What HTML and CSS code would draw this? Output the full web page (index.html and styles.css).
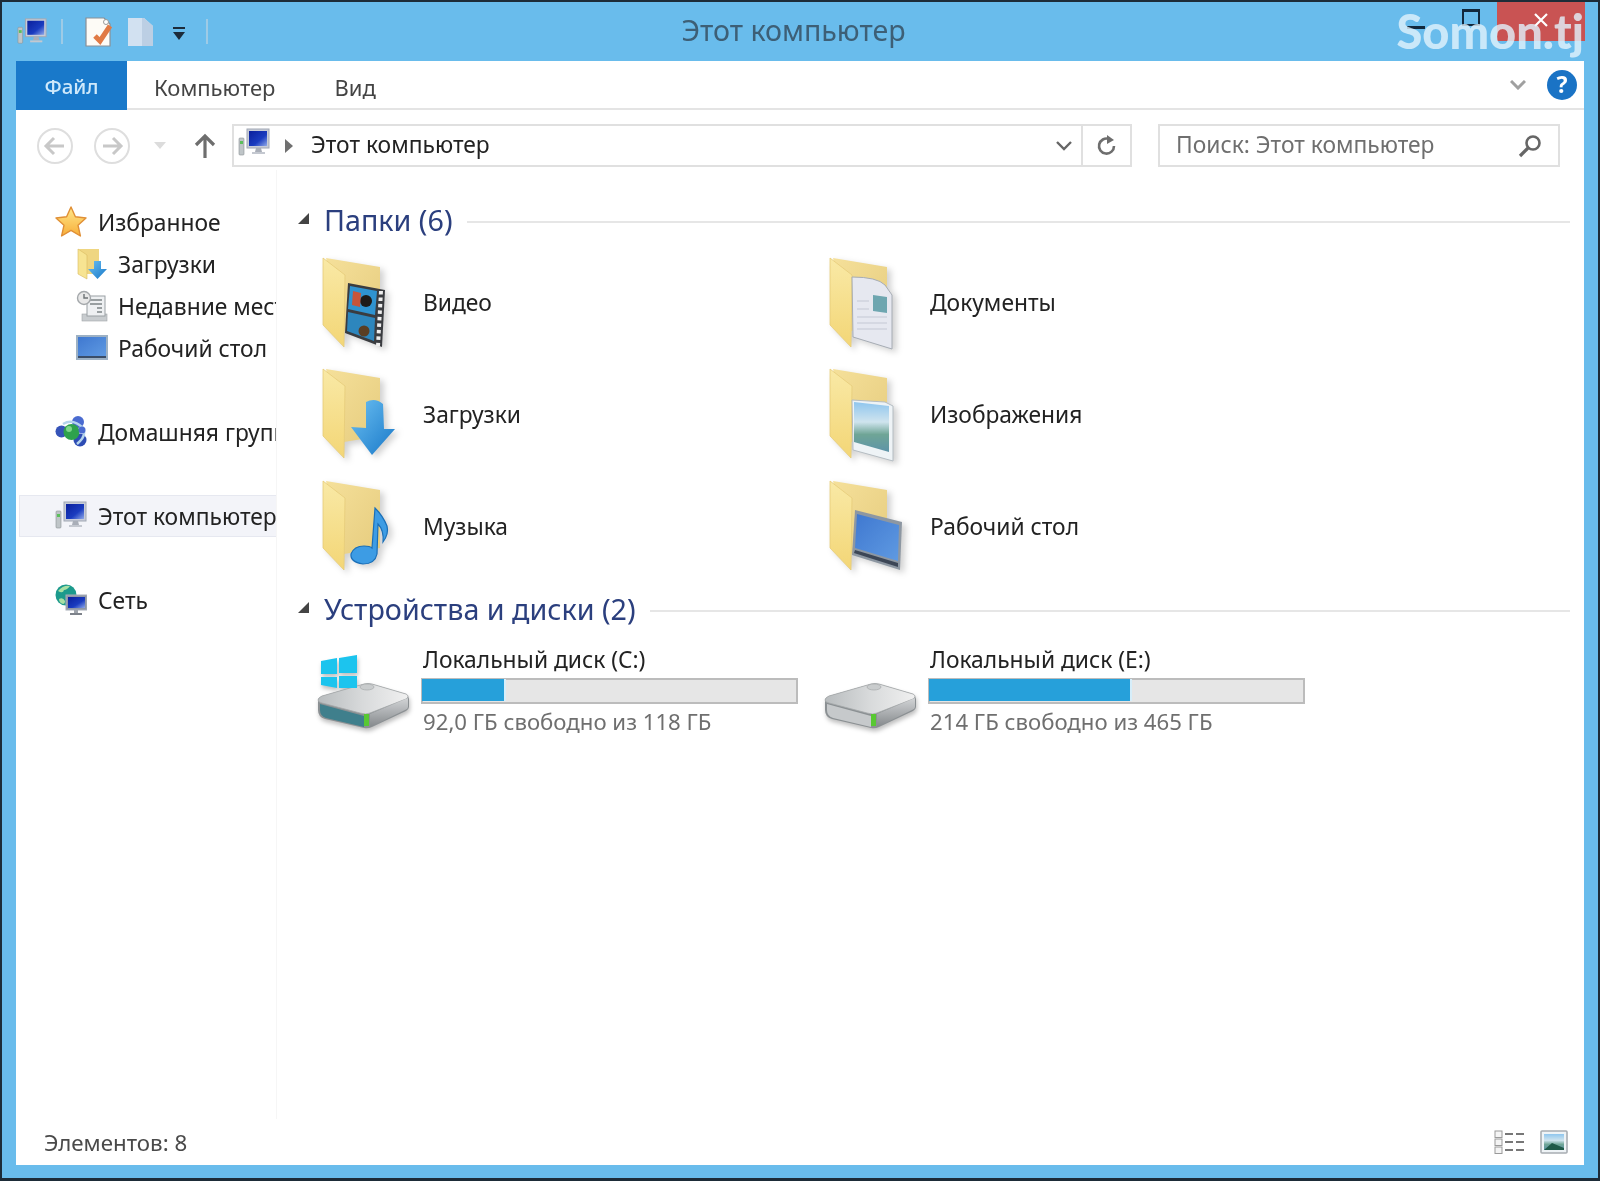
FILE: index.html
```html
<!DOCTYPE html>
<html lang="ru">
<head>
<meta charset="utf-8">
<title>Этот компьютер</title>
<link rel="stylesheet" href="styles.css">
</head>
<body>
<svg class="sprite" width="0" height="0" aria-hidden="true">
  <defs>
    <linearGradient id="gLeaf" x1="0" y1="0" x2="0" y2="1"><stop offset="0" stop-color="#f9e9a6"/><stop offset="1" stop-color="#f3d676"/></linearGradient>
    <linearGradient id="gBack" x1="0" y1="0" x2="1" y2="1"><stop offset="0" stop-color="#f5e09a"/><stop offset="1" stop-color="#e6cc7e"/></linearGradient>
    <linearGradient id="gBlue" x1="0" y1="0" x2="1" y2="1"><stop offset="0" stop-color="#6cc0f2"/><stop offset="1" stop-color="#1878c8"/></linearGradient>
    <linearGradient id="gDesk" x1="0" y1="0" x2="1" y2="1"><stop offset="0" stop-color="#3f78d0"/><stop offset="1" stop-color="#5f9ae2"/></linearGradient>
    <linearGradient id="gScreen" x1="0" y1="0" x2="1" y2="1"><stop offset="0" stop-color="#0a1f9c"/><stop offset=".6" stop-color="#1a3cc0"/><stop offset="1" stop-color="#8fa8e8"/></linearGradient>
    <linearGradient id="gPic" x1="0" y1="0" x2="0" y2="1"><stop offset="0" stop-color="#8fc6ee"/><stop offset=".4" stop-color="#cfe4ee"/><stop offset=".65" stop-color="#6fa596"/><stop offset="1" stop-color="#5d93a8"/></linearGradient>
    <linearGradient id="gHdd" x1="0" y1="0" x2="1" y2="0"><stop offset="0" stop-color="#b8bcbe"/><stop offset=".5" stop-color="#d8dadb"/><stop offset="1" stop-color="#f0f0f0"/></linearGradient>
    <linearGradient id="gHddSide" x1="0" y1="0" x2="0" y2="1"><stop offset="0" stop-color="#d2d4d6"/><stop offset="1" stop-color="#85898c"/></linearGradient>
    <linearGradient id="gStar" x1="0" y1="0" x2="0" y2="1"><stop offset="0" stop-color="#ffe88a"/><stop offset="1" stop-color="#f7ae3a"/></linearGradient>

    <symbol id="folder" viewBox="0 0 80 100">
      <path d="M6 5 L60 14 V72 L24 78 Z" fill="url(#gBack)"/>
      <path d="M3 5 L25 22 L24 94 L3 72 Z" fill="url(#gLeaf)" stroke="#e6cb7a" stroke-width=".8"/>
    </symbol>

    <symbol id="computer" viewBox="0 0 32 32">
      <rect x="1" y="11" width="5" height="17" rx="1" fill="#bfc5c8" stroke="#8c9294" stroke-width=".6"/>
      <rect x="2" y="14" width="3" height="3" fill="#5bbf5b"/>
      <rect x="9" y="2" width="22" height="19" fill="#c7ccd8" stroke="#a2a8b4"/>
      <rect x="11" y="4" width="18" height="15" fill="url(#gScreen)"/>
      <path d="M18 21h5l1 4h-7z" fill="#a9aeb8"/>
      <rect x="14" y="25" width="13" height="2" fill="#c4c8d0"/>
    </symbol>

    <symbol id="star" viewBox="0 0 32 32">
      <path d="M16 1 L20.4 10.8 L31 12 L23 19.2 L25.4 30 L16 24.4 L6.6 30 L9 19.2 L1 12 L11.6 10.8 Z" fill="url(#gStar)" stroke="#e08f35" stroke-width="1.4" stroke-linejoin="round"/>
    </symbol>

    <symbol id="folderDown" viewBox="0 0 32 32">
      <path d="M3 1 H23 V26 H11 Z" fill="#efd681"/>
      <path d="M2 1 L11 7 V31 L2 26 Z" fill="#f7e492" stroke="#d9bb60" stroke-width=".6"/>
      <path d="M18 13 h7 v8 h6 l-9.500 10 L12 21 h6 Z" fill="url(#gBlue)"/>
    </symbol>

    <symbol id="recent" viewBox="0 0 32 32">
      <rect x="6" y="24" width="25" height="7" fill="#c8cccf" stroke="#a0a5a8" stroke-width=".6"/>
      <rect x="11" y="6" width="18" height="20" fill="#eef0f2" stroke="#9aa0a4"/>
      <path d="M14 10h12M14 14h12M21 18h5M21 22h5" stroke="#7d8487" stroke-width="1.600"/>
      <circle cx="8" cy="8" r="6.500" fill="#e8e8e8" stroke="#a4a8ab" stroke-width="1.400"/>
      <path d="M8 4v4h4" fill="none" stroke="#6d7376" stroke-width="1.400"/>
    </symbol>

    <symbol id="desktop" viewBox="0 0 32 32">
      <rect x="0" y="3" width="32" height="25" fill="#9db1c4"/>
      <rect x="2" y="5" width="28" height="19" fill="url(#gDesk)"/>
      <rect x="2" y="24" width="28" height="2" fill="#3a4d68"/>
    </symbol>

    <symbol id="home" viewBox="0 0 32 32">
      <circle cx="6.500" cy="15.500" r="6" fill="#3654b8"/>
      <circle cx="23" cy="6" r="6" fill="#4a6bd0"/>
      <circle cx="25" cy="24" r="6.500" fill="#2d4cb4"/>
      <path d="M8 8 Q18 2 28 12 Q32 20 22 28" fill="none" stroke="#b4d4ec" stroke-width="2.500"/>
      <circle cx="16.500" cy="16" r="8" fill="#2ea24c"/>
      <circle cx="14" cy="13" r="3" fill="#7ed68a"/>
      <circle cx="27" cy="14" r="3.500" fill="#4a6bd0"/>
    </symbol>

    <symbol id="network" viewBox="0 0 32 32">
      <circle cx="11" cy="11" r="10.500" fill="#1c9a8c"/>
      <path d="M3 7 q5 -6 12 -5 q-3 4 -6 4 q-1 4 -6 1 M4 15 q4 -2 6 2 q0 3 -2 3 q-4 -1 -4 -5" fill="#a9e0a4"/>
      <rect x="11" y="11" width="21" height="15" fill="#8f97a6" stroke="#a8aeb8"/>
      <rect x="13" y="13" width="17" height="11" fill="url(#gScreen)"/>
      <path d="M19 26h4v3h-4z" fill="#9ea3ab"/>
      <rect x="15" y="29" width="12" height="2" fill="#7d828a"/>
    </symbol>

    <symbol id="hdd" viewBox="0 0 100 80">
      <path d="M4 50 Q4 48 8 46 L50 34 Q54 33 58 34 L92 44 Q95 46 95 49 V57 Q95 59 92 61 L58 77 Q54 79 50 78 L11 69 Q4 67 4 60 Z" fill="#8b9093"/>
      <path d="M4 50 Q4 48 8 46 L50 34 Q54 33 58 34 L92 44 Q96 46 92 49 L56 63 Q52 65 46 63 L8 53 Q4 52 4 50 Z" fill="url(#gHdd)" stroke="#a4a8aa" stroke-width=".8"/>
      <ellipse cx="53" cy="37" rx="7" ry="3" fill="#c9cccd" stroke="#a6a9ab" stroke-width=".7"/>
      <path d="M56 64 L94 48 V57 Q94 59 91 60 L56 77 Z" fill="url(#gHddSide)"/>
    </symbol>
  </defs>
</svg>

<div class="window">
  <header class="titlebar">
    <div class="qat">
      <svg class="qat-computer"><use href="#computer"/></svg>
      <span class="qat-sep"></span>
      <svg class="qat-doc" viewBox="0 0 28 30">
        <path d="M2 1 H20 L26 7 V29 H2 Z" fill="#fdfbf6" stroke="#8a8f95" stroke-width="1.200"/>
        <circle cx="22" cy="5" r="2.500" fill="#fff" stroke="#9b9b9b"/>
        <path d="M11 19 L16 24 L26 9" fill="none" stroke="#e07a45" stroke-width="5"/>
      </svg>
      <svg class="qat-page" viewBox="0 0 26 28">
        <path d="M0 0 H16 L25 8 V28 H0 Z" fill="#d2e1f1"/>
        <path d="M14 0 H16 L25 8 V28 H14 Z" fill="#bccfe4"/>
      </svg>
      <svg class="qat-drop" viewBox="0 0 14 14">
        <rect x="1" y="0" width="12" height="2" fill="#1c2b3a"/>
        <path d="M1 5 H13 L7 13 Z" fill="#1c2b3a"/>
      </svg>
      <span class="qat-sep qat-sep-last"></span>
    </div>
    <h1 class="title">Этот компьютер</h1>
    <div class="controls">
      <span class="ctl ctl-min"><i class="min-bar"></i></span>
      <span class="ctl ctl-max"><i class="max-box"></i></span>
      <span class="ctl ctl-close">
        <svg class="close-x" viewBox="0 0 14 14"><path d="M1 1 L13 13 M13 1 L1 13" stroke="#fff" stroke-width="2.200"/></svg>
      </span>
    </div>
  </header>

  <main class="frame">
    <nav class="ribbon">
      <span class="tab tab-file">Файл</span>
      <span class="tab tab-computer">Компьютер</span>
      <span class="tab tab-view">Вид</span>
      <span class="ribbon-space"></span>
      <svg class="ribbon-chev" viewBox="0 0 16 10"><path d="M1 1 L8 8 L15 1" fill="none" stroke="#a0a0a0" stroke-width="3"/></svg>
      <span class="help">?</span>
    </nav>

    <div class="nav">
      <svg class="nav-round" viewBox="0 0 36 36"><circle cx="18" cy="18" r="17" fill="none" stroke="#dedede" stroke-width="2"/><path d="M27 18 H10 M17 10 L9 18 L17 26" fill="none" stroke="#c8c8c8" stroke-width="3"/></svg>
      <svg class="nav-round nav-forward" viewBox="0 0 36 36"><circle cx="18" cy="18" r="17" fill="none" stroke="#dedede" stroke-width="2"/><path d="M9 18 H26 M19 10 L27 18 L19 26" fill="none" stroke="#c8c8c8" stroke-width="3"/></svg>
      <svg class="nav-drop" viewBox="0 0 14 8"><path d="M0 0 H14 L7 8 Z" fill="#dcdcdc"/></svg>
      <svg class="nav-up" viewBox="0 0 22 26"><path d="M11 25 V3 M2 12 L11 3 L20 12" fill="none" stroke="#6e6e6e" stroke-width="3.200"/></svg>
      <div class="address">
        <svg class="address-icon"><use href="#computer"/></svg>
        <svg class="address-arrow" viewBox="0 0 8 14"><path d="M0 0 L8 7 L0 14 Z" fill="#707070"/></svg>
        <span class="address-text">Этот компьютер</span>
        <svg class="address-chev" viewBox="0 0 16 10"><path d="M1 1 L8 8 L15 1" fill="none" stroke="#666" stroke-width="2.400"/></svg>
        <span class="address-refresh">
          <svg class="refresh-icon" viewBox="0 0 22 22"><path d="M18 11 A7.500 7.500 0 1 1 13 4" fill="none" stroke="#6e6e6e" stroke-width="2.600"/><path d="M11 0 L18 5 L11 9 Z" fill="#6e6e6e"/></svg>
        </span>
      </div>
      <div class="search">
        <span class="search-text">Поиск: Этот компьютер</span>
        <svg class="search-icon" viewBox="0 0 24 24"><circle cx="15" cy="9" r="6.500" fill="none" stroke="#666" stroke-width="2.600"/><path d="M10 14 L2 22" stroke="#666" stroke-width="3.200"/></svg>
      </div>
    </div>

    <div class="content">
      <aside class="sidebar">
        <div class="row"><svg class="row-icon"><use href="#star"/></svg><span class="row-text">Избранное</span></div>
        <div class="row row-child"><svg class="row-icon"><use href="#folderDown"/></svg><span class="row-text">Загрузки</span></div>
        <div class="row row-child"><svg class="row-icon"><use href="#recent"/></svg><span class="row-text">Недавние места</span></div>
        <div class="row row-child"><svg class="row-icon"><use href="#desktop"/></svg><span class="row-text">Рабочий стол</span></div>
        <div class="row row-group"><svg class="row-icon"><use href="#home"/></svg><span class="row-text">Домашняя группа</span></div>
        <div class="row row-group row-selected"><svg class="row-icon"><use href="#computer"/></svg><span class="row-text">Этот компьютер</span></div>
        <div class="row row-group"><svg class="row-icon"><use href="#network"/></svg><span class="row-text">Сеть</span></div>
      </aside>

      <section class="main">
        <div class="group-head">
          <svg class="group-tri" viewBox="0 0 11 11"><path d="M11 0 V11 H0 Z" fill="#444"/></svg>
          <span class="group-title">Папки (6)</span>
          <span class="group-line"></span>
        </div>
        <div class="grid folders">
          <div class="item">
            <svg class="folder" viewBox="0 0 80 100">
              <use href="#folder"/>
              <path d="M28 30 L65 37 L62 94 L25 80 Z" fill="#3a3c40"/>
              <path d="M30 33 L57 38 L55 62 L28 56 Z" fill="#2f93d0"/>
              <path d="M28 59 L55 65 L54 88 L27 78 Z" fill="#2d86bd"/>
              <circle cx="46" cy="48" r="6" fill="#1e1a18"/>
              <path d="M33 38 L41 40 L40 54 L32 52 Z" fill="#c8553a"/>
              <circle cx="44" cy="78" r="5.500" fill="#5a3e24"/>
              <path d="M61 38 L58 93" stroke="#eeeeee" stroke-width="4" stroke-dasharray="3.500 3"/>
            </svg>
            <span class="item-name">Видео</span>
          </div>
          <div class="item">
            <svg class="folder" viewBox="0 0 80 100">
              <use href="#folder"/>
              <path d="M25 24 Q50 24 58 32 L65 42 V96 L26 84 Z" fill="#e6e8f0" stroke="#a6acb4" stroke-width="1"/>
              <path d="M46 42 L60 44 V60 L46 58 Z" fill="#6ea6b0"/>
              <path d="M30 48 H42 M30 56 H42 M30 64 H60 M30 70 H60 M30 76 H60" stroke="#d5d8e2" stroke-width="2"/>
            </svg>
            <span class="item-name">Документы</span>
          </div>
          <div class="item">
            <svg class="folder" viewBox="0 0 80 100">
              <use href="#folder"/>
              <path d="M46 38 Q55 33 63 40 L64 65 H75 L52 91 L31 63 L46 64 Z" fill="url(#gBlue)"/>
            </svg>
            <span class="item-name">Загрузки</span>
          </div>
          <div class="item">
            <svg class="folder" viewBox="0 0 80 100">
              <use href="#folder"/>
              <path d="M25 36 L58 38 L66 42 V97 L26 86 Z" fill="#eef3f6" stroke="#b4bcc2" stroke-width="1"/>
              <path d="M27 38 L62 42 V88 L27 78 Z" fill="url(#gPic)"/>
            </svg>
            <span class="item-name">Изображения</span>
          </div>
          <div class="item">
            <svg class="folder" viewBox="0 0 80 100">
              <use href="#folder"/>
              <path d="M55 32 Q63 40 67 50 Q69 58 63 66 Q64 54 58 48 L57 78 Q55 88 43 88 Q30 86 31 78 Q34 70 44 70 Q50 70 52 72 Z" fill="#3d9ce4" stroke="#1a6fb8" stroke-width="1.200"/>
            </svg>
            <span class="item-name">Музыка</span>
          </div>
          <div class="item">
            <svg class="folder" viewBox="0 0 80 100">
              <use href="#folder"/>
              <path d="M28 34 L75 46 L73 94 L25 79 Z" fill="#8d97a2"/>
              <path d="M30 38 L72 49 L71 85 L28 72 Z" fill="url(#gDesk)"/>
              <path d="M28 74 L71 87 V91 L27 77 Z" fill="#3c4656"/>
            </svg>
            <span class="item-name">Рабочий стол</span>
          </div>
        </div>

        <div class="group-head group-drives">
          <svg class="group-tri" viewBox="0 0 11 11"><path d="M11 0 V11 H0 Z" fill="#444"/></svg>
          <span class="group-title">Устройства и диски (2)</span>
          <span class="group-line"></span>
        </div>
        <div class="grid drives">
          <div class="drive">
            <svg class="drive-icon" viewBox="0 0 100 80">
              <use href="#hdd"/>
              <path d="M6 54 L50 66 V77 L12 68 Q6 66 6 60 Z" fill="#3f7f8c"/>
              <rect x="50" y="64" width="5" height="12" fill="#58c832"/>
              <path d="M7 11 L23 8 V24 H7 Z M25 8 L43 5 V23 H25 Z M7 27 H23 V38 L7 35 Z M25 26 H43 V38 L25 38 Z" fill="#1cc4ee"/>
            </svg>
            <div class="drive-info">
              <div class="drive-name">Локальный диск (C:)</div>
              <div class="bar"><div class="bar-fill" style="width:22%"></div></div>
              <div class="drive-free">92,0 ГБ свободно из 118 ГБ</div>
            </div>
          </div>
          <div class="drive">
            <svg class="drive-icon" viewBox="0 0 100 80">
              <use href="#hdd"/>
              <path d="M6 54 L50 66 V77 L12 68 Q6 66 6 60 Z" fill="#c6c9cb"/>
              <rect x="50" y="64" width="5" height="12" fill="#58c832"/>
            </svg>
            <div class="drive-info">
              <div class="drive-name">Локальный диск (E:)</div>
              <div class="bar"><div class="bar-fill" style="width:54%"></div></div>
              <div class="drive-free">214 ГБ свободно из 465 ГБ</div>
            </div>
          </div>
        </div>
      </section>
    </div>

    <footer class="status">
      <span class="status-text">Элементов: 8</span>
      <span class="status-views">
        <svg class="view-list" viewBox="0 0 30 24">
          <rect x="1" y="1" width="7" height="6.500" fill="#f4f4f4" stroke="#9a9a9a"/>
          <rect x="1" y="9" width="7" height="6.500" fill="#f4f4f4" stroke="#9a9a9a"/>
          <rect x="1" y="17" width="7" height="6.500" fill="#f4f4f4" stroke="#9a9a9a"/>
          <path d="M11 4 H19 M22 4 H30 M11 12 H19 M22 12 H30 M11 20 H19 M22 20 H30" stroke="#777" stroke-width="2"/>
        </svg>
        <svg class="view-large" viewBox="0 0 28 24">
          <rect x="1" y="1" width="26" height="22" rx="1" fill="#eef3f6" stroke="#a8adb2" stroke-width="1.600"/>
          <rect x="4" y="4" width="20" height="16" fill="url(#gPic)"/>
          <path d="M4 20 L12 13 L24 18 V20 Z" fill="#1f5a48"/>
        </svg>
      </span>
    </footer>
  </main>

  <div class="watermark">Somon.tj</div>
</div>
</body>
</html>
```

FILE: styles.css
```css
* { box-sizing: border-box; }

html, body { margin: 0; padding: 0; background: #fff; }

body {
  width: 1600px;
  height: 1181px;
  overflow: hidden;
  font-family: "Noto Sans", "Open Sans", sans-serif;
  font-size: 22.8px;
  color: #1e1e1e;
}

.sprite { display: block; width: 0; height: 0; }

.window {
  position: relative;
  width: 1600px;
  height: 1181px;
  display: flex;
  flex-direction: column;
  background: #69bcec;
  border: solid #1d2c38;
  border-width: 2px 2px 3px 2px;
  padding-bottom: 13px;
  filter: blur(.6px);
  overflow: hidden;
}

/* Title bar */
.titlebar {
  height: 59px;
  flex: none;
  display: grid;
  grid-template-columns: 1fr auto 1fr;
  padding-right: 13px;
}

.qat {
  display: flex;
  align-items: center;
  padding-left: 15px;
}

.qat-computer { width: 30px; height: 30px; }
.qat-sep { width: 2px; height: 25px; margin-left: 14px; background: #9ecbe6; }
.qat-doc { width: 28px; height: 30px; margin-left: 21px; }
.qat-page { width: 26px; height: 28px; margin-left: 16px; }
.qat-drop { width: 14px; height: 14px; margin-left: 18px; margin-top: 5px; }
.qat-sep-last { margin-left: 20px; }

.title {
  margin: -4px 0 0;
  align-self: center;
  font-size: 28.6px;
  font-weight: 400;
  color: #3d5f76;
  white-space: nowrap;
}

.controls { display: flex; justify-content: flex-end; align-items: flex-start; }
.ctl { display: flex; align-items: center; justify-content: center; height: 39px; }
.ctl-min { width: 58px; }
.ctl-max { width: 52px; }
.ctl-close { width: 88px; background: #c95353; }
.min-bar { width: 18px; height: 3px; margin-top: 12px; background: #12283c; }
.max-box { width: 18px; height: 17px; margin-top: -8px; border: 2px solid #12283c; border-top-width: 3px; }
.close-x { width: 14px; height: 14px; margin-top: -3px; }

/* Frame */
.frame {
  flex: 1;
  min-height: 0;
  margin: 0 14px;
  display: flex;
  flex-direction: column;
  background: #fff;
}

/* Ribbon */
.ribbon {
  height: 49px;
  flex: none;
  display: flex;
  align-items: stretch;
  border-bottom: 2px solid #e4e4e4;
  font-size: 22px;
  color: #444;
}

.tab { display: flex; align-items: center; padding-top: 4px; }
.tab-file {
  width: 111px;
  justify-content: center;
  padding-top: 0;
  background: #1979ca;
  color: #cfe9fb;
  font-size: 20.500px;
  font-weight: 500;
  margin-bottom: -2px;
}
.tab-computer { margin-left: 27px; }
.tab-view { margin-left: 59px; }
.ribbon-space { flex: 1; }
.ribbon-chev { width: 16px; height: 10px; align-self: center; margin-right: 21px; }
.help {
  width: 30px;
  height: 30px;
  align-self: center;
  margin-right: 7px;
  border-radius: 50%;
  background: #1a73c5;
  color: #fff;
  font-weight: 700;
  font-size: 23px;
  line-height: 29px;
  text-align: center;
}

/* Navigation */
.nav {
  height: 60px;
  flex: none;
  display: flex;
  align-items: center;
  padding: 14px 0 3px 21px;
}

.nav-round { width: 36px; height: 36px; flex: none; }
.nav-forward { margin-left: 21px; }
.nav-drop { width: 12px; height: 7px; margin-left: 24px; }
.nav-up { width: 22px; height: 26px; margin-left: 28px; }

.address, .search {
  height: 43px;
  display: flex;
  align-items: center;
  border: 2px solid #e0e0e0;
}

.address { width: 900px; margin-left: 16px; padding-left: 4px; }
.address-icon { width: 32px; height: 32px; margin-top: -5px; }
.address-arrow { width: 8px; height: 14px; margin-left: 15px; }
.address-text { margin: -2px 0 0 18px; flex: 1; color: #222; }
.address-chev { width: 16px; height: 10px; margin-right: 9px; }
.address-refresh {
  width: 49px;
  height: 100%;
  display: flex;
  align-items: center;
  justify-content: center;
  border-left: 2px solid #e0e0e0;
}
.refresh-icon { width: 22px; height: 22px; }

.search { width: 402px; margin-left: 26px; padding: 0 16px; justify-content: space-between; }
.search-text { margin-top: -2px; color: #6f6f6f; }
.search-icon { width: 24px; height: 24px; }

/* Content */
.content { flex: 1; min-height: 0; display: flex; }

.sidebar {
  width: 261px;
  flex: none;
  padding-top: 31px;
  border-right: 1px solid #f6f6f6;
  overflow: hidden;
}

.row {
  height: 42px;
  display: flex;
  align-items: center;
  gap: 11px;
  padding-left: 39px;
  white-space: nowrap;
  overflow: hidden;
}
.row-child { padding-left: 60px; gap: 10px; }
.row-group { margin-top: 42px; }
.row-selected {
  margin-left: 3px;
  padding-left: 35px;
  background: #f3f4f9;
  border: 1px solid #e6e8f0;
  border-right: 0;
}
.row-icon { width: 32px; height: 32px; flex: none; }
.row-text { color: #222; }

.main { flex: 1; min-width: 0; padding-top: 29px; }

.group-head {
  height: 40px;
  display: flex;
  align-items: center;
  padding: 0 14px 0 21px;
}
.group-drives { margin-top: 7px; }
.group-tri { width: 11px; height: 11px; margin-top: -2px; }
.group-title { margin-left: 15px; font-size: 28.7px; color: #2b3f7e; white-space: nowrap; }
.group-line { flex: 1; height: 2px; margin: 5px 0 0 14px; background: #e6e6e6; }

.grid { display: grid; grid-template-columns: repeat(2, 507px); padding-left: 43px; }
.folders { margin-top: 8px; grid-auto-rows: 111.67px; }
.drives { margin-top: 16px; }

.item { display: flex; align-items: center; gap: 23px; }
.folder { width: 80px; height: 100px; flex: none; filter: drop-shadow(4px 3px 3px rgba(0, 0, 0, .18)); }
.item-name { color: #222; }

.drive { display: flex; align-items: flex-start; gap: 7px; margin-left: -6px; }
.drive-icon { width: 100px; height: 80px; margin-top: 5px; flex: none; filter: drop-shadow(1px 3px 2px rgba(0, 0, 0, .25)); }
.drive-info { width: 377px; }
.drive-name, .drive-free { height: 30px; line-height: 30px; padding-left: 2px; white-space: nowrap; }
.drive-name { color: #222; }
.drive-free { font-size: 22.2px; color: #6f6f6f; }

.bar { height: 26px; margin: 3px 0; background: #e6e6e6; border: 2px solid #bcbcbc; }
.bar-fill { height: 100%; margin: -1px 0 0 -1px; background: #26a0da; box-shadow: 2px 0 0 #d6eefa; }

/* Status */
.status {
  height: 46px;
  flex: none;
  display: flex;
  align-items: center;
  justify-content: space-between;
  padding: 0 16px 0 28px;
}
.status-text { font-size: 22.3px; color: #4a4a4a; }
.status-views { display: flex; align-items: center; gap: 16px; }
.view-list { width: 30px; height: 24px; }
.view-large { width: 28px; height: 24px; }

/* Overlay */
.watermark {
  position: absolute;
  top: 1px;
  right: 14px;
  font-family: "Lato", "Noto Sans", sans-serif;
  font-size: 47px;
  font-weight: 900;
  line-height: 56px;
  color: rgba(226, 242, 252, .8);
}
```
